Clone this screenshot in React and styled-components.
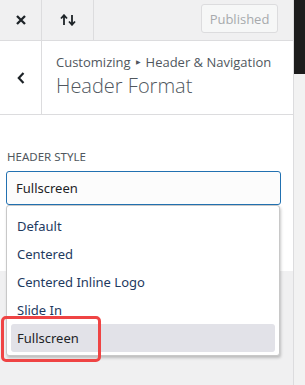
import React from "react";
import styled, { createGlobalStyle } from "styled-components";

const GlobalStyle = createGlobalStyle`
  html, body {
    margin: 0;
    padding: 0;
    background: #f0f0f1;
  }
  body {
    font-family: "Open Sans", "Noto Sans", sans-serif;
  }
`;

const Screen = styled.div`
  width: 305px;
  height: 385px;
  display: flex;
  overflow: hidden;
  position: relative;
  background: #f0f0f1;
`;

const Sidebar = styled.div`
  width: 293px;
  display: flex;
  flex-direction: column;
  background: #f0f0f1;
  border-right: 1px solid #dcdcde;
`;

const Preview = styled.div`
  flex: 1;
  display: flex;
  flex-direction: column;
`;

const PreviewTop = styled.div`
  height: 74px;
  background: #1d1d1d;
`;

const PreviewBody = styled.div`
  flex: 1;
  background: #f2f2f2;
`;

const Toolbar = styled.div`
  height: 40px;
  display: flex;
  align-items: stretch;
  background: #f0f0f1;
  border-bottom: 1px solid #dcdcde;
`;

const ToolButton = styled.div`
  width: ${(p) => p.$w}px;
  display: flex;
  align-items: center;
  justify-content: center;
  border-right: 1px solid #dcdcde;
  color: #1d2327;
`;

const Spacer = styled.div`
  flex: 1;
`;

const PublishButton = styled.div`
  margin: 4px 15px 0 0;
  height: 29px;
  width: 77px;
  box-sizing: border-box;
  border: 1px solid #dcdcde;
  border-radius: 3px;
  background: #f6f7f7;
  color: #a7aaad;
  font-size: 13px;
  display: flex;
  align-items: center;
  justify-content: center;
`;

const PanelHeader = styled.div`
  height: 73px;
  display: flex;
  background: #fff;
  border-bottom: 1px solid #dcdcde;
`;

const BackButton = styled.div`
  width: 41px;
  display: flex;
  align-items: center;
  justify-content: center;
  border-right: 1px solid #dcdcde;
  color: #1d2327;
`;

const Titles = styled.div`
  display: flex;
  flex-direction: column;
  padding: 12px 0 0 14px;
`;

const Crumb = styled.div`
  font-size: 13px;
  line-height: 18px;
  color: #50575e;
  display: flex;
  align-items: center;
  gap: 5px;
`;

const Arrow = styled.span`
  font-size: 6px;
  color: #50575e;
`;

const Title = styled.div`
  font-size: 20px;
  font-weight: 300;
  line-height: 28px;
  margin-top: 1px;
  color: #50575e;
`;

const Section = styled.div`
  background: #fff;
  height: 156px;
  padding: 35px 12px 0 6px;
  box-sizing: border-box;
`;

const Label = styled.div`
  font-family: "Noto Sans", sans-serif;
  font-size: 11.5px;
  line-height: 14px;
  color: #50575e;
  padding-left: 1px;
  margin-bottom: 7px;
`;

const Select = styled.div`
  height: 34px;
  box-sizing: border-box;
  border: 1px solid #2271b1;
  border-radius: 3px;
  background: #fcfcfc;
  display: flex;
  align-items: center;
  padding-left: 9px;
  font-family: "Noto Sans", sans-serif;
  font-size: 13px;
  color: #1d2327;
`;

const Menu = styled.div`
  position: absolute;
  left: 6px;
  top: 205px;
  width: 274px;
  box-sizing: border-box;
  padding: 6px 4px 3px 4px;
  background: #fff;
  border: 1px solid #c8c8c8;
  border-radius: 3px;
  box-shadow: 1px 2px 3px rgba(0, 0, 0, 0.22);
  display: flex;
  flex-direction: column;
`;

const Option = styled.div`
  height: 28px;
  display: flex;
  align-items: center;
  padding-left: 6px;
  border-radius: 3px;
  font-family: "Noto Sans", sans-serif;
  font-size: 13px;
  background: ${(p) => (p.$active ? "#e2e2e8" : "transparent")};
  color: ${(p) => (p.$active ? "#1d2327" : "#1e3a5f")};
`;

const Marker = styled.div`
  position: absolute;
  left: 1px;
  top: 316px;
  width: 100px;
  height: 46px;
  box-sizing: border-box;
  border: 3px solid #ef4444;
  border-radius: 5px;
`;

const options = ["Default", "Centered", "Centered Inline Logo", "Slide In", "Fullscreen"];

const App = () => {
  return (
    <Screen>
      <GlobalStyle />
      <Sidebar>
        <Toolbar>
          <ToolButton $w={41}>
            <svg width="10" height="10" viewBox="0 0 10 10">
              <path d="M1 1 L9 9 M9 1 L1 9" stroke="#1d2327" strokeWidth="2.3" />
            </svg>
          </ToolButton>
          <ToolButton $w={51}>
            <svg width="18" height="12" viewBox="0 0 18 12">
              <path d="M5 11 V2 M2 4.5 L5 1.2 L8 4.5" stroke="#1d2327" strokeWidth="1.8" fill="none" />
              <path d="M13 1 V10 M10 7.5 L13 10.8 L16 7.5" stroke="#1d2327" strokeWidth="1.8" fill="none" />
            </svg>
          </ToolButton>
          <Spacer />
          <PublishButton>Published</PublishButton>
        </Toolbar>
        <PanelHeader>
          <BackButton>
            <svg width="8" height="12" viewBox="0 0 8 12">
              <path d="M6.5 1 L1.8 6 L6.5 11" stroke="#1d2327" strokeWidth="2.2" fill="none" />
            </svg>
          </BackButton>
          <Titles>
            <Crumb>
              Customizing <Arrow>▶</Arrow> Header &amp; Navigation
            </Crumb>
            <Title>Header Format</Title>
          </Titles>
        </PanelHeader>
        <Section>
          <Label>HEADER STYLE</Label>
          <Select>Fullscreen</Select>
        </Section>
      </Sidebar>
      <Preview>
        <PreviewTop />
        <PreviewBody />
      </Preview>
      <Menu>
        {options.map((o) => (
          <Option key={o} $active={o === "Fullscreen"}>
            {o}
          </Option>
        ))}
      </Menu>
      <Marker />
    </Screen>
  );
};

export default App;
